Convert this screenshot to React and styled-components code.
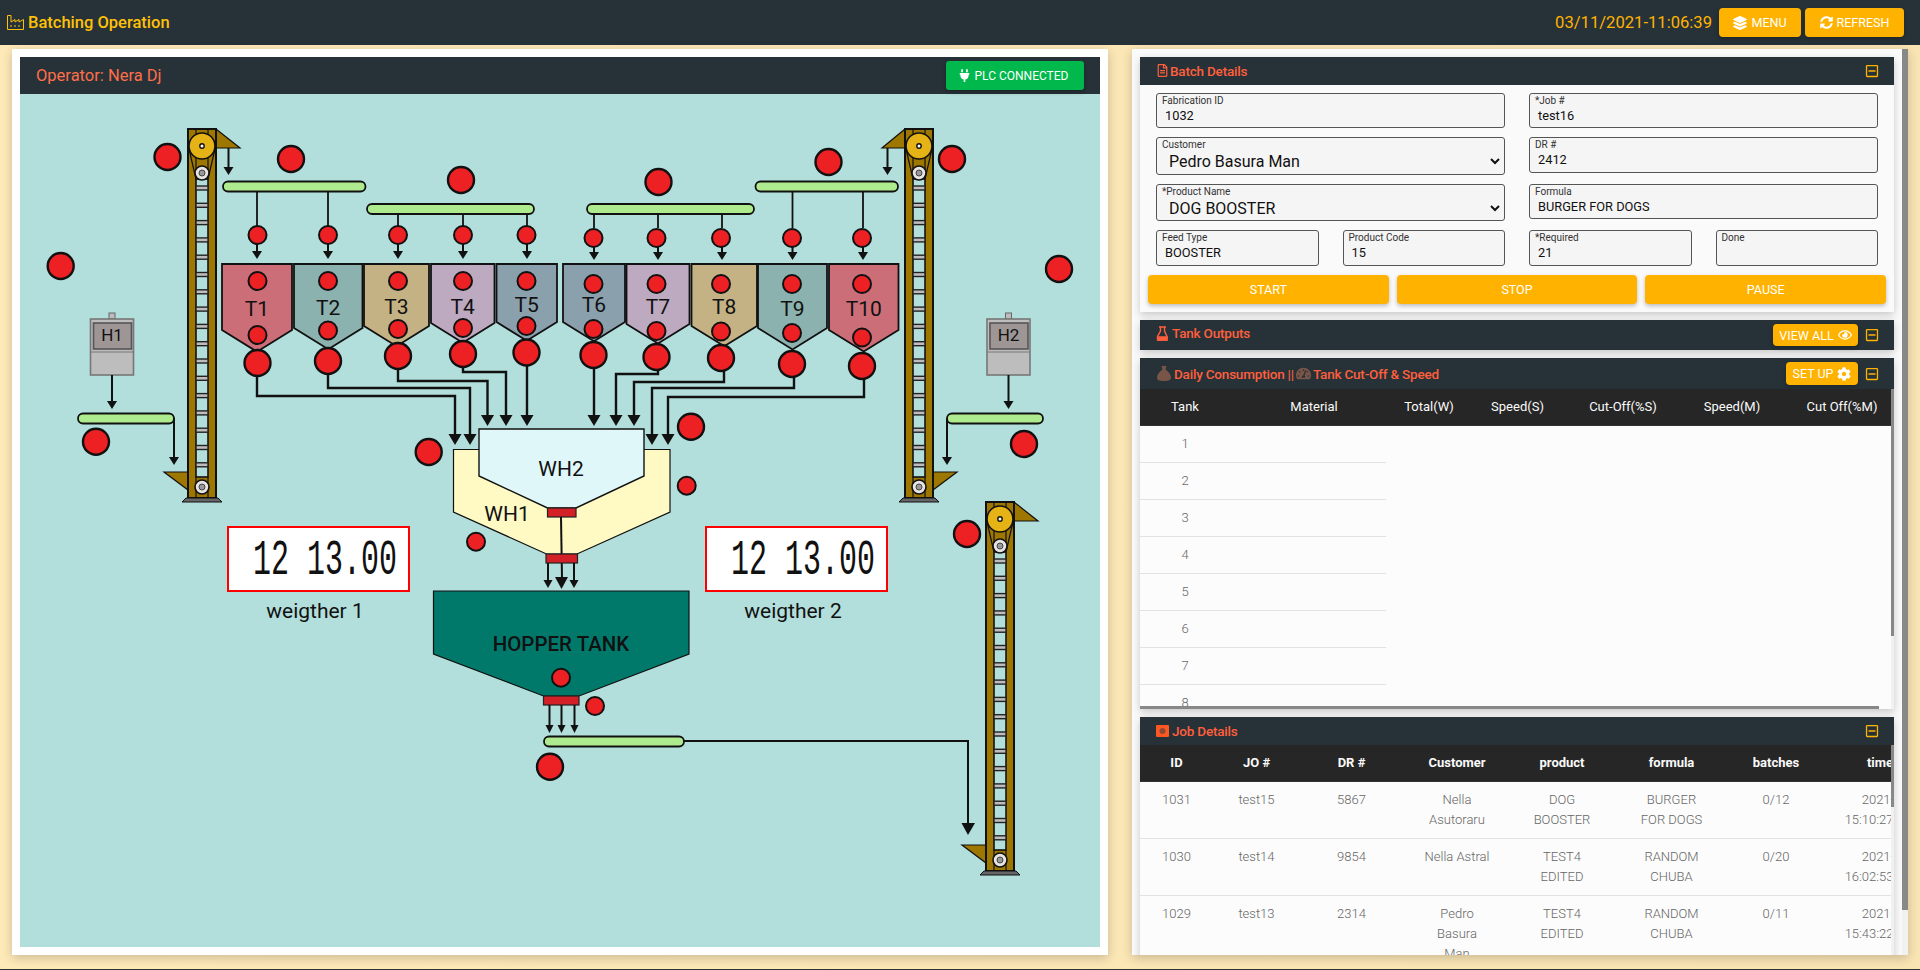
import React from "react";
import styled, { createGlobalStyle } from "styled-components";
import {
  FaCog,
  FaLayerGroup,
  FaPlug,
  FaRegEye,
  FaRegFileAlt,
  FaRegMinusSquare,
  FaSyncAlt,
  FaTachometerAlt,
} from "react-icons/fa";

const GlobalStyle = createGlobalStyle`
  html, body {
    margin: 0;
    height: 100%;
    overflow: hidden;
    font-family: Roboto, "Liberation Sans", sans-serif;
    background: #fce8b9;
  }
  * { box-sizing: border-box; }
`;

const TEAL = "#b2dfdb";
const BROWN = "#9e7700";
const INK = "#111";

const tanks = [
  { label: "T1", x1: 222, x2: 292, sh: 330, fill: "#cc6e78", ly: 309, cx: 257.5, top: 281, low: 335, out: 363, feed: 257 },
  { label: "T2", x1: 294, x2: 362.5, sh: 328, fill: "#8bb2ae", ly: 308, cx: 328, top: 281, low: 330.5, out: 361, feed: 328 },
  { label: "T3", x1: 364, x2: 429, sh: 326, fill: "#c4b284", ly: 307, cx: 398, top: 281, low: 329, out: 356, feed: 398 },
  { label: "T4", x1: 431, x2: 494.5, sh: 323, fill: "#bda9c0", ly: 307, cx: 463, top: 281, low: 328, out: 354, feed: 463 },
  { label: "T5", x1: 496.5, x2: 557, sh: 322, fill: "#8ba0ad", ly: 305, cx: 526.5, top: 281, low: 326, out: 352.5, feed: 527 },
  { label: "T6", x1: 563, x2: 625, sh: 322, fill: "#8ba0ad", ly: 305, cx: 593.5, top: 284, low: 329, out: 355, feed: 594 },
  { label: "T7", x1: 626.5, x2: 689.5, sh: 324, fill: "#bda9c0", ly: 307, cx: 656.5, top: 284, low: 331, out: 357, feed: 658 },
  { label: "T8", x1: 691.5, x2: 757, sh: 326, fill: "#c4b284", ly: 307, cx: 721, top: 284, low: 331.5, out: 358, feed: 722 },
  { label: "T9", x1: 758, x2: 827, sh: 328, fill: "#8bb2ae", ly: 309, cx: 792, top: 284, low: 333, out: 364, feed: 792.5 },
  { label: "T10", x1: 829, x2: 898.5, sh: 330, fill: "#cc6e78", ly: 309, cx: 862, top: 284, low: 337.5, out: 366, feed: 863 },
];

// outlet pipes, tank bottom to weigh hopper
const pipes = [
  { d: "M257 376V396H455V437", tip: 445, x: 455 },
  { d: "M328 374V388H470V437", tip: 445, x: 470 },
  { d: "M398 369V381H487.5V418", tip: 426, x: 487.5 },
  { d: "M463 367V372H506V418", tip: 426, x: 506 },
  { d: "M527 365V418", tip: 426, x: 527 },
  { d: "M594 368V418", tip: 426, x: 594 },
  { d: "M658 370V374H616V418", tip: 426, x: 616 },
  { d: "M724 371V382H634V418", tip: 426, x: 634 },
  { d: "M794 377V388H652V437", tip: 445, x: 652 },
  { d: "M864 379V397H668V437", tip: 445, x: 668 },
];

const bigLamps = [
  [167.5, 157], [291, 159], [461, 180], [60.7, 266], [658.5, 182], [828.5, 162],
  [952, 159], [1059, 269], [96, 441.7], [1024, 444], [428.7, 452], [691, 426.7],
  [550, 766.7], [967, 534],
];
const smallLamps = [[595, 706], [561, 677.7], [476, 541.7], [686.7, 485.7]];

const Page = styled.div`
  height: 100vh;
  display: flex;
  flex-direction: column;
  background: linear-gradient(90deg, #fee9b9, #f9e4b4);
`;

const TopBar = styled.header`
  height: 45px;
  flex: none;
  display: flex;
  align-items: center;
  padding: 0 16px 0 7px;
  background: #263238;
`;

const AppTitle = styled.h1`
  flex: 1;
  margin: 0;
  display: flex;
  align-items: center;
  gap: 4px;
  font-size: 16.5px;
  font-weight: 500;
  color: #ffc107;
`;

const Clock = styled.span`
  font-size: 16.6px;
  color: #ffb300;
  margin-right: 7px;
`;

const AmberButton = styled.button`
  height: ${(p) => p.$h || 29}px;
  width: ${(p) => (p.$w ? `${p.$w}px` : "auto")};
  margin-left: ${(p) => p.$ml || 0}px;
  padding: 0;
  display: inline-flex;
  align-items: center;
  justify-content: center;
  gap: 4px;
  border: none;
  border-radius: 4px;
  background: #ffb300;
  color: #fff;
  font-family: inherit;
  font-size: ${(p) => p.$fs || 12.5}px;
  font-weight: 400;
  box-shadow: 0 2px 4px rgba(0, 0, 0, 0.25);
`;

const Main = styled.main`
  flex: 1;
  min-height: 0;
  display: flex;
  gap: 24px;
  padding: 4px 12px 14px;
`;

const BottomLine = styled.div`
  height: 1px;
  flex: none;
  background: #333;
`;

const DiagramCard = styled.section`
  width: 1096px;
  flex: none;
  padding: 8px;
  background: #fff;
  box-shadow: 0 3px 10px rgba(0, 0, 0, 0.2);
`;

const OperatorBar = styled.div`
  height: 37px;
  display: flex;
  align-items: center;
  justify-content: space-between;
  padding: 0 16px;
  background: #263238;
`;

const Operator = styled.span`
  font-size: 16.5px;
  font-weight: 400;
  color: #ff6e4a;
`;

const PlcBadge = styled.button`
  width: 138px;
  height: 29px;
  display: inline-flex;
  align-items: center;
  justify-content: center;
  gap: 4px;
  padding: 0 4px 0 0;
  border: none;
  border-radius: 3px;
  background: #00b84c;
  color: #fff;
  font-family: inherit;
  font-size: 12px;
  box-shadow: 0 2px 4px rgba(0, 0, 0, 0.3);
`;

const Diagram = styled.svg`
  display: block;
  width: 1080px;
  height: 853px;
  background: ${TEAL};
`;

const Caption = styled.text`
  font-family: Roboto, sans-serif;
  font-size: ${(p) => p.$size || 21}px;
  font-weight: ${(p) => p.$weight || 400};
  fill: ${INK};
  text-anchor: middle;
  dominant-baseline: central;
`;

const Readout = styled.text`
  font-family: "Liberation Mono", monospace;
  font-size: 50px;
  fill: #111;
  dominant-baseline: central;
`;

const SidePanelCard = styled.section`
  position: relative;
  flex: 1;
  min-width: 0;
  padding: 8px 14px 8px 8px;
  overflow: hidden;
  background: #fafafa;
  box-shadow: 0 3px 10px rgba(0, 0, 0, 0.2);
  display: flex;
  flex-direction: column;
  gap: 8px;
`;

// the scrollbars are drawn, a headless browser hides the real ones
const ScrollTrack = styled.div`
  position: absolute;
  top: 0;
  right: 0;
  bottom: 0;
  width: ${(p) => p.$size}px;
  background: #f1f1f1;
`;

const ScrollThumb = styled.div`
  height: ${(p) => p.$len}px;
  background: #888;
`;

const SideThumb = styled.div`
  position: absolute;
  left: 0;
  bottom: 0;
  width: ${(p) => p.$len}px;
  height: 3px;
  background: #888;
`;

const Panel = styled.div`
  flex: none;
  background: #fafafa;
  box-shadow: 0 3px 8px rgba(0, 0, 0, 0.2);
`;

const PanelHead = styled.div`
  height: ${(p) => p.$h || 28}px;
  display: flex;
  align-items: center;
  gap: 7px;
  padding: 0 15px 0 16px;
  background: #263238;
  color: #ffb300;
`;

const PanelTitle = styled.div`
  flex: 1;
  display: flex;
  align-items: center;
  gap: ${(p) => p.$gap ?? 3}px;
  font-size: 13.5px;
  font-weight: 500;
  color: #ff5f3c;
  letter-spacing: -0.2px;
  margin-top: ${(p) => p.$up || 0}px;
`;

const Fields = styled.div`
  display: grid;
  grid-template-columns: 1fr 1fr;
  gap: 9px 24px;
  align-items: start;
  padding: 8px 16px 0;
`;

const FieldPair = styled.div`
  display: grid;
  grid-template-columns: 1fr 1fr;
  gap: 24px;
`;

const Field = styled.div`
  height: ${(p) => p.$h}px;
  border: 1px solid #555;
  border-radius: 3px;
  background: #f5f5f5;
`;

const FieldLabel = styled.div`
  height: 13px;
  padding: 1px 0 0 5px;
  font-size: 10px;
  line-height: 12px;
  color: #333;
`;

const FieldValue = styled.div`
  height: 18px;
  padding-left: 8px;
  font-size: 12.8px;
  line-height: 18px;
  color: #111;
`;

const FieldSelect = styled.select`
  display: block;
  width: calc(100% - 1px);
  height: 21px;
  padding: 0 4px 0 8px;
  border: none;
  outline: none;
  background: transparent;
  font-family: inherit;
  font-size: 16px;
  color: #111;
`;

const ActionRow = styled.div`
  display: grid;
  grid-template-columns: repeat(3, 1fr);
  gap: 8px;
  padding: 9px 8px 8px;
`;

const TableFrame = styled.div`
  position: relative;
  height: ${(p) => p.$h}px;
  padding-right: 3px;
`;

const TableClip = styled.div`
  height: 100%;
  overflow: hidden;
  background: #fcfcfc;
`;

const Table = styled.table`
  width: ${(p) => p.$w}px;
  table-layout: fixed;
  border-collapse: collapse;
`;

const Th = styled.th`
  height: 36px;
  padding: 0 0 0 ${(p) => p.$indent || 0}px;
  background: #262626;
  color: #fafafa;
  font-size: 13px;
  font-weight: ${(p) => p.$weight || 400};
  text-align: center;
  border-bottom: 1px solid #333;
`;

const TankCell = styled.td`
  height: 37px;
  padding: 0;
  font-size: 13px;
  font-weight: 300;
  color: #666;
  text-align: center;
  border-bottom: 1px solid #e2e2e2;
`;

const JobCell = styled.td`
  padding: 8px ${(p) => p.$pad ?? 16}px;
  vertical-align: top;
  font-size: 13px;
  font-weight: 300;
  line-height: 20px;
  color: #666;
  text-align: center;
  border-bottom: 1px solid #e2e2e2;
`;

const TimeDate = styled.div`
  padding-right: 4px;
`;

const TimeClock = styled.div`
  padding-right: 22px;
`;

const FactoryIcon = () => (
  <svg width="17" height="15" viewBox="0 0 17 15" fill="none" stroke="#ffc107" strokeWidth="1">
    <path d="M.5.5H4V7L8 4.5V7L12 4.5V7L16.5 4.5V14.5H.5Z" />
    <path d="M3 11h2M7 11h2M11 11h2" />
  </svg>
);

const FlaskIcon = () => (
  <svg width="13" height="15" viewBox="0 0 13 15" fill="none" stroke="#ff5f3c" strokeWidth="1.4">
    <path d="M3 1h7M4.5 1v4L1.5 10.500V14H11V10.500L8.500 5V1" />
    <path d="M2 11h9v3H2z" fill="#ff5f3c" />
  </svg>
);

const SackIcon = () => (
  <svg width="16" height="15" viewBox="0 0 16 15" fill="#795548">
    <path d="M5.500 0h5l-1 3.500C13 6 15 9 15 11.500 15 14 13 15 8 15S1 14 1 11.500C1 9 3 6 6.500 3.500Z" />
  </svg>
);

const AlarmIcon = () => (
  <svg width="13" height="12" viewBox="0 0 13 12">
    <rect width="13" height="12" rx="1" fill="#ff5722" />
    <circle cx="6.500" cy="6" r="3" fill="#8a4a34" />
  </svg>
);

const Arrow = ({ x, y1, y2, w = 2, head = 5, len = 8 }) => (
  <g>
    <line x1={x} y1={y1} x2={x} y2={y2 - len + 1} stroke={INK} strokeWidth={w} />
    <polygon points={`${x - head},${y2 - len} ${x + head},${y2 - len} ${x},${y2}`} fill={INK} />
  </g>
);

const Lamp = ({ x, y, r = 13 }) => (
  <circle cx={x} cy={y} r={r} fill="#ed2024" stroke={INK} strokeWidth={r > 10 ? 2.4 : 2} />
);

const Conveyor = ({ x1, x2, y }) => (
  <rect x={x1} y={y} width={x2 - x1} height={10} rx={5} fill="#aeea8e" stroke={INK} strokeWidth="1.8" />
);

const Gate = ({ x1, x2, y }) => (
  <rect x={x1} y={y} width={x2 - x1} height={9} fill="#d32027" stroke="#222" strokeWidth="1.2" />
);

const Pulley = ({ x, y }) => (
  <g>
    <circle cx={x} cy={y} r={7} fill="#e8e4e4" stroke={INK} strokeWidth="1.6" />
    <circle cx={x} cy={y} r={3} fill="#999" stroke="#444" />
  </g>
);

// bucket elevator; x is the left edge of the frame, side is the chute side at the head
const Elevator = ({ x, top, side }) => {
  const mid = x + 14;
  const rungs = Array.from({ length: 17 }, (_, i) => top + 59 + i * 17.3);
  const head =
    side === "right"
      ? `${x + 28},${top} ${x + 52},${top + 19} ${x + 28},${top + 19}`
      : `${x},${top} ${x - 23},${top + 19} ${x},${top + 19}`;
  const foot =
    side === "right"
      ? `${x},${top + 343} ${x - 24},${top + 343} ${x},${top + 361}`
      : `${x + 28},${top + 343} ${x + 52},${top + 343} ${x + 28},${top + 361}`;
  return (
    <g>
      <polygon points={head} fill={BROWN} stroke={INK} strokeWidth="1.2" />
      <polygon points={foot} fill={BROWN} stroke={INK} strokeWidth="1.2" />
      <rect x={x} y={top} width={28} height={369} fill={BROWN} stroke={INK} strokeWidth="2" />
      <rect x={x + 8} y={top + 50} width={12} height={298} fill={TEAL} stroke={INK} strokeWidth="1.6" />
      <path
        d={`M${x + 8} ${top}V${top + 50}M${x + 20} ${top}V${top + 50}M${x + 1} ${top + 20}L${x + 8} ${top + 50}M${x + 27} ${top + 20}L${x + 20} ${top + 50}M${x + 8} ${top + 348}V${top + 369}M${x + 20} ${top + 348}V${top + 369}`}
        stroke={INK}
        strokeWidth="1.2"
        fill="none"
      />
      {rungs.map((y) => (
        <rect key={y} x={x + 8} y={y - 2} width={12} height={4} fill="#bdbdbd" stroke="#222" strokeWidth="1.4" />
      ))}
      <circle cx={mid} cy={top + 17} r={13} fill="#e6b316" stroke={INK} strokeWidth="1.6" />
      <circle cx={mid} cy={top + 17} r={2.2} fill="#fff" stroke={INK} strokeWidth="1.4" />
      <Pulley x={mid} y={top + 44} />
      <Pulley x={mid} y={top + 358} />
      <polygon points={`${x - 6},${top + 373} ${x - 2},${top + 369} ${x + 30},${top + 369} ${x + 34},${top + 373}`} fill="#666" stroke={INK} />
    </g>
  );
};

const Hoist = ({ x, label }) => (
  <g>
    <rect x={x - 3} y={313} width={6} height={6} fill="#bdbdbd" stroke="#666" />
    <rect x={x - 21.500} y={319} width={43} height={56} fill="#bdbdbd" stroke="#777" strokeWidth="1.6" />
    <line x1={x - 21} y1={352} x2={x + 21} y2={352} stroke="#777" />
    <rect x={x - 18.500} y={323} width={38} height={26} fill="#9e9595" stroke="#555" strokeWidth="1.6" />
    <Caption x={x} y={335} $size={17}>{label}</Caption>
    <Arrow x={x} y1={375} y2={409} />
  </g>
);

const WeightBox = ({ x, text, label }) => (
  <g>
    <rect x={x} y={527} width={181} height={64} fill="#fff" stroke="#f00" strokeWidth="2" />
    <Readout x={x + 25} y={560} textLength={144} lengthAdjust="spacingAndGlyphs">{text}</Readout>
    <Caption x={x + 87} y={611}>{label}</Caption>
  </g>
);

const Plant = () => (
  <Diagram viewBox="20 94 1080 853">
    <Elevator x={188} top={129} side="right" />
    <Elevator x={905} top={129} side="left" />
    <Elevator x={986} top={502} side="right" />

    <Arrow x={228.5} y1={148} y2={175} />
    <Arrow x={887.5} y1={148} y2={175} />

    <Conveyor x1={223} x2={365.500} y={181.500} />
    <Conveyor x1={367} x2={534} y={204} />
    <Conveyor x1={587} x2={754} y={204} />
    <Conveyor x1={755.500} x2={898} y={181.500} />

    <Hoist x={112} label="H1" />
    <Hoist x={1008.5} label="H2" />
    <Conveyor x1={78} x2={174} y={413.500} />
    <Conveyor x1={947} x2={1043} y={413.500} />
    <Arrow x={174} y1={418} y2={465} />
    <Arrow x={947} y1={418} y2={465} />

    {tanks.map((t) => {
      const mid = (t.x1 + t.x2) / 2;
      const conveyorY = t.cx < 360 || t.cx > 760 ? 191 : 214;
      return (
        <g key={t.label}>
          <line x1={t.feed} y1={conveyorY} x2={t.feed} y2={228} stroke={INK} strokeWidth="1.8" />
          <Arrow x={t.feed} y1={240} y2={t.cx > 560 ? 260 : 259} />
          <Lamp x={t.cx} y={t.cx > 560 ? 238 : 235} r={9} />
          <polygon
            points={`${t.x1},264 ${t.x2},264 ${t.x2},${t.sh} ${mid},${t.sh + (t.x2 - t.x1) * 0.31} ${t.x1},${t.sh}`}
            fill={t.fill}
            stroke={INK}
            strokeWidth="1.8"
          />
          <Caption x={mid} y={t.ly}>{t.label}</Caption>
          <Lamp x={t.cx} y={t.top} r={9} />
          <Lamp x={t.cx} y={t.low} r={9} />
        </g>
      );
    })}

    {pipes.map((p) => (
      <g key={p.x}>
        <path d={p.d} fill="none" stroke={INK} strokeWidth="2.400" />
        <polygon points={`${p.x - 6.500},${p.tip - 11} ${p.x + 6.500},${p.tip - 11} ${p.x},${p.tip}`} fill={INK} />
      </g>
    ))}

    {tanks.map((t) => (
      <Lamp key={t.label} x={t.cx} y={t.out} />
    ))}

    <polygon points="453.500,449.500 670,449.500 670,512 577,554 546.500,554 453.500,512" fill="#fff9c4" stroke={INK} strokeWidth="1.2" />
    <polygon points="479,429 644,429 644,476 576,508 547.500,508 479,476" fill="#e0f7fa" stroke={INK} strokeWidth="1.4" />
    <Caption x={561} y={469} $size={21}>WH2</Caption>
    <Caption x={507} y={514} $size={21}>WH1</Caption>
    <Gate x1={547.500} x2={576} y={508} />
    <line x1={561} y1={517} x2={562} y2={578} stroke={INK} strokeWidth="2" />
    <Gate x1={546} x2={577.500} y={554} />
    <Arrow x={548} y1={563} y2={588} head={4.500} />
    <Arrow x={574} y1={563} y2={588} head={4.500} />
    <polygon points="555,577 568,577 561.500,589" fill={INK} />

    <polygon points="433.500,591 689,591 689,654 579,696 543.500,696 433.500,654" fill="#00796b" stroke={INK} strokeWidth="1.2" />
    <Caption x={561} y={644} $size={20.5} $weight={500}>HOPPER TANK</Caption>
    <Gate x1={543.500} x2={579} y={696} />
    <Arrow x={549.500} y1={705} y2={733} head={4} />
    <Arrow x={561.500} y1={705} y2={733} head={4} />
    <Arrow x={574.500} y1={705} y2={733} head={4} />
    <Conveyor x1={544} x2={684} y={736.500} />
    <path d="M684 741H968V826" fill="none" stroke={INK} strokeWidth="2" />
    <polygon points="961.500,823 975,823 968,835" fill={INK} />

    <WeightBox x={228} text="12 13.00" label="weigther 1" />
    <WeightBox x={706} text="12 13.00" label="weigther 2" />

    {bigLamps.map(([x, y]) => (
      <Lamp key={`${x}-${y}`} x={x} y={y} />
    ))}
    {smallLamps.map(([x, y]) => (
      <Lamp key={`${x}-${y}`} x={x} y={y} r={9} />
    ))}
  </Diagram>
);

const MinusToggle = () => <FaRegMinusSquare size={14} color="#ffb300" />;

const TextField = ({ label, value, h = 35 }) => (
  <Field $h={h}>
    <FieldLabel>{label}</FieldLabel>
    <FieldValue>{value}</FieldValue>
  </Field>
);

const SelectField = ({ label, value, h }) => (
  <Field $h={h}>
    <FieldLabel>{label}</FieldLabel>
    <FieldSelect defaultValue={value}>
      <option>{value}</option>
    </FieldSelect>
  </Field>
);

const BatchDetails = () => (
  <Panel>
    <PanelHead>
      <PanelTitle $up={-1} $gap={1}>
        <FaRegFileAlt size={13} /> Batch Details
      </PanelTitle>
      <MinusToggle />
    </PanelHead>
    <Fields>
      <TextField label="Fabrication ID" value="1032" />
      <TextField label="*Job #" value="test16" />
      <SelectField label="Customer" value="Pedro Basura Man" h={38} />
      <TextField label="DR #" value="2412" h={36} />
      <SelectField label="*Product Name" value="DOG BOOSTER" h={37} />
      <TextField label="Formula" value="BURGER FOR DOGS" />
      <FieldPair>
        <TextField label="Feed Type" value="BOOSTER" h={36} />
        <TextField label="Product Code" value="15" h={36} />
      </FieldPair>
      <FieldPair>
        <TextField label="*Required" value="21" h={36} />
        <TextField label="Done" value="" h={36} />
      </FieldPair>
    </Fields>
    <ActionRow>
      <AmberButton>START</AmberButton>
      <AmberButton>STOP</AmberButton>
      <AmberButton>PAUSE</AmberButton>
    </ActionRow>
  </Panel>
);

const tankCols = [90, 156, 86, 91, 120, 98, 122];
const tankHeads = ["Tank", "Material", "Total(W)", "Speed(S)", "Cut-Off(%S)", "Speed(M)", "Cut Off(%M)"];

const Consumption = () => (
  <Panel>
    <PanelHead $h={31}>
      <PanelTitle $gap={2}>
        <SackIcon />
        Daily Consumption || <FaTachometerAlt size={15} color="#795548" />
        Tank Cut-Off &amp; Speed
      </PanelTitle>
      <AmberButton $w={72} $h={23} $fs={12.5}>
        SET UP <FaCog size={14} />
      </AmberButton>
      <MinusToggle />
    </PanelHead>
    <TableFrame $h={320}>
      <TableClip>
        <Table $w={763}>
          <colgroup>
            {tankCols.map((w, i) => (
              <col key={i} style={{ width: w }} />
            ))}
          </colgroup>
          <thead>
            <tr>
              {tankHeads.map((h, i) => (
                <Th key={h} $indent={i === 1 ? 12 : 0}>{h}</Th>
              ))}
            </tr>
          </thead>
          <tbody>
            {Array.from({ length: 10 }, (_, i) => (
              <tr key={i}>
                <TankCell>{i + 1}</TankCell>
                <TankCell />
              </tr>
            ))}
          </tbody>
        </Table>
      </TableClip>
      <ScrollTrack $size={3}>
        <ScrollThumb $len={247} />
      </ScrollTrack>
      <SideThumb $len={739} />
    </TableFrame>
  </Panel>
);

const jobCols = [73, 87, 103, 108, 102, 117, 92, 116];
const jobHeads = ["ID", "JO #", "DR #", "Customer", "product", "formula", "batches", "time"];
const jobs = [
  ["1031", "test15", "5867", "Nella Asutoraru", "DOG BOOSTER", "BURGER FOR DOGS", "0/12", "2021-", "15:10:27"],
  ["1030", "test14", "9854", "Nella Astral", "TEST4 EDITED", "RANDOM CHUBA", "0/20", "2021-", "16:02:53"],
  ["1029", "test13", "2314", "Pedro Basura Man", "TEST4 EDITED", "RANDOM CHUBA", "0/11", "2021-", "15:43:22"],
];
const jobPads = [16, 16, 16, 20, 16, 24, 16];

const JobDetails = () => (
  <Panel>
    <PanelHead>
      <PanelTitle $up={-1}>
        <AlarmIcon /> Job Details
      </PanelTitle>
      <MinusToggle />
    </PanelHead>
    <TableFrame $h={249}>
      <TableClip>
        <Table $w={798}>
          <colgroup>
            {jobCols.map((w, i) => (
              <col key={i} style={{ width: w }} />
            ))}
          </colgroup>
          <thead>
            <tr>
              {jobHeads.map((h) => (
                <Th key={h} $weight={700}>{h}</Th>
              ))}
            </tr>
          </thead>
          <tbody>
            {jobs.map((row) => (
              <tr key={row[0]}>
                {row.slice(0, 7).map((cell, i) => (
                  <JobCell key={i} $pad={jobPads[i]}>{cell}</JobCell>
                ))}
                <JobCell $pad={0}>
                  <TimeDate>{row[7]}</TimeDate>
                  <TimeClock>{row[8]}</TimeClock>
                </JobCell>
              </tr>
            ))}
          </tbody>
        </Table>
      </TableClip>
      <ScrollTrack $size={3}>
        <ScrollThumb $len={62} />
      </ScrollTrack>
    </TableFrame>
  </Panel>
);

export default function App() {
  return (
    <Page>
      <GlobalStyle />
      <TopBar>
        <AppTitle>
          <FactoryIcon /> Batching Operation
        </AppTitle>
        <Clock>03/11/2021-11:06:39</Clock>
        <AmberButton $w={82}>
          <FaLayerGroup size={14} /> MENU
        </AmberButton>
        <AmberButton $w={99} $ml={4}>
          <FaSyncAlt size={13} /> REFRESH
        </AmberButton>
      </TopBar>
      <Main>
        <DiagramCard>
          <OperatorBar>
            <Operator>Operator: Nera Dj</Operator>
            <PlcBadge>
              <FaPlug size={13} /> PLC CONNECTED
            </PlcBadge>
          </OperatorBar>
          <Plant />
        </DiagramCard>
        <SidePanelCard>
          <BatchDetails />
          <Panel>
            <PanelHead $h={30}>
              <PanelTitle $up={-4}>
                <FlaskIcon /> Tank Outputs
              </PanelTitle>
              <AmberButton $w={85} $h={22} $fs={12.5}>
                VIEW ALL <FaRegEye size={14} />
              </AmberButton>
              <MinusToggle />
            </PanelHead>
          </Panel>
          <Consumption />
          <JobDetails />
          <ScrollTrack $size={6}>
            <ScrollThumb $len={861} />
          </ScrollTrack>
        </SidePanelCard>
      </Main>
      <BottomLine />
    </Page>
  );
}
